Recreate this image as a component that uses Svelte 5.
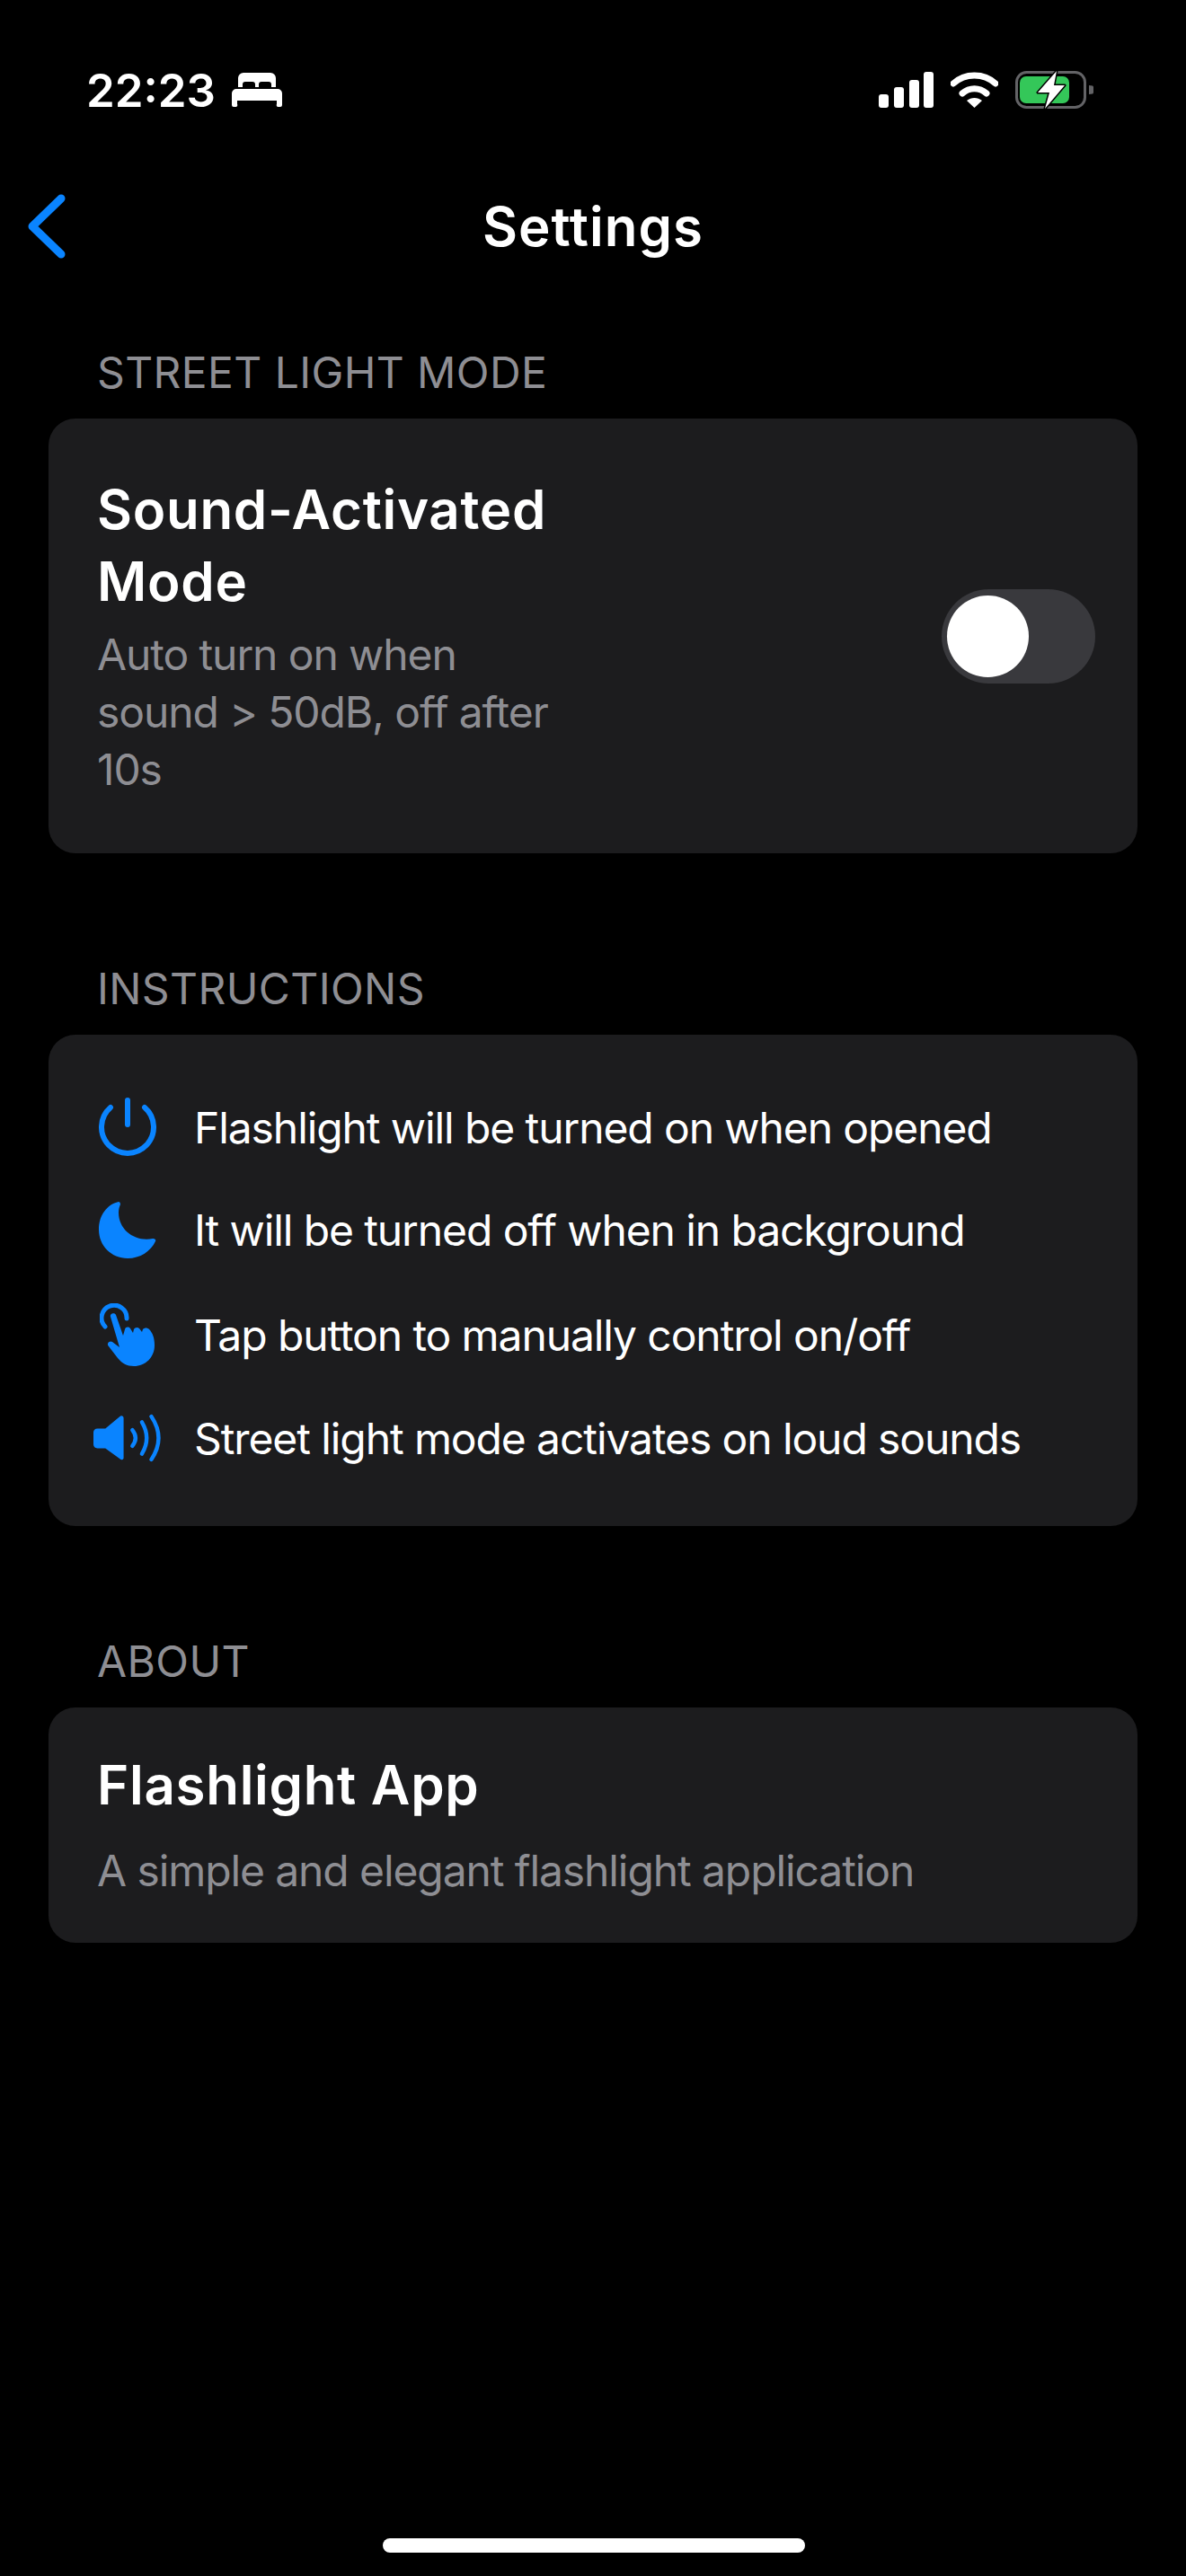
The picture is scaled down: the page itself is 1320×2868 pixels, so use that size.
<script>
	const tips = [
		{ icon: 'power', text: 'Flashlight will be turned on when opened' },
		{ icon: 'moon', text: 'It will be turned off when in background' },
		{ icon: 'hand', text: 'Tap button to manually control on/off' },
		{ icon: 'speaker', text: 'Street light mode activates on loud sounds' }
	];
</script>

<main class="screen">
	<header class="status">
		<div class="time">
			<span>22:23</span>
			<svg width="56" height="38" viewBox="0 0 56 38" fill="#fff">
				<path d="M7 16V6a6 6 0 0 1 6-6h30a6 6 0 0 1 6 6v10h-5v-3a3 3 0 0 0-3-3H33a3 3 0 0 0-3 3v3h-4v-3a3 3 0 0 0-3-3H15a3 3 0 0 0-3 3v3z" />
				<path d="M5 18h46a5 5 0 0 1 5 5v13a2 2 0 0 1-2 2h-2a2 2 0 0 1-2-3v-4H6v4a2 2 0 0 1-2 3H2a2 2 0 0 1-2-2V23a5 5 0 0 1 5-5z" />
			</svg>
		</div>
		<div class="indicators">
			<svg width="61" height="40" viewBox="0 0 61 40" fill="#fff">
				<rect x="0" y="25" width="11" height="15" rx="3" />
				<rect x="17" y="17" width="11" height="23" rx="3" />
				<rect x="34" y="9" width="11" height="31" rx="3" />
				<rect x="50" y="0" width="11" height="40" rx="3" />
			</svg>
			<svg width="53" height="40" viewBox="0 0 53 40" fill="none" stroke="#fff">
				<path d="M3 13C16 1 37 1 50 13" stroke-width="7" stroke-linecap="round" />
				<path d="M13 24c8-7 19-7 27 0" stroke-width="7" stroke-linecap="round" />
				<path d="M18 32c5-4 12-4 17 0l-8.500 8z" fill="#fff" stroke="none" />
			</svg>
			<svg class="battery" width="88" height="42" viewBox="0 0 88 42">
				<rect x="1.500" y="1.500" width="76" height="39" rx="11" fill="none" stroke="#636366" stroke-width="3" />
				<rect x="5" y="6" width="55" height="30" rx="7" fill="#34c759" />
				<path d="M87 18v6a2 2 0 0 1-1 1.500L82 26V16l4 .500a2 2 0 0 1 1 1.500z" fill="#636366" />
				<path d="M46 0 25 24h13l-5 18 22-26H43z" fill="#fff" stroke="#000" stroke-width="3" stroke-linejoin="round" paint-order="stroke" />
			</svg>
		</div>
	</header>

	<nav class="nav">
		<svg class="back" width="44" height="72" viewBox="0 0 44 72" fill="none">
			<path d="M38 5 6 36l32 31" stroke="#0a84ff" stroke-width="9" stroke-linecap="round" stroke-linejoin="round" />
		</svg>
		<h1>Settings</h1>
	</nav>

	<section class="group first">
		<h2>STREET LIGHT MODE</h2>
		<div class="card mode">
			<div class="mode-text">
				<h3>Sound-Activated Mode</h3>
				<p>Auto turn on when sound &gt; 50dB, off after 10s</p>
			</div>
			<div class="switch"><span class="knob"></span></div>
		</div>
	</section>

	<section class="group">
		<h2>INSTRUCTIONS</h2>
		<div class="card tips">
			{#each tips as tip}
				<div class="tip">
					<span class="tip-icon">
						{#if tip.icon === 'power'}
							<svg width="64" height="66" viewBox="0 0 64 66" fill="none" stroke="#0a84ff" stroke-width="6" stroke-linecap="round">
								<path d="M32 3v27" />
								<path d="M13 11a29 29 0 1 0 38 0" />
							</svg>
						{:else if tip.icon === 'moon'}
							<svg width="64" height="63" viewBox="0 0 64 63" fill="#0a84ff">
								<path d="M22 0C9 3 0 15 0 31c0 18 14 32 32 32 14 0 26-8 31-19 1-2-1-3-3-3-19 4-38-9-38-29 0-4 1-7 2-9 0-2-1-3-2-3z" />
							</svg>
						{:else if tip.icon === 'hand'}
							<svg width="62" height="70" viewBox="0 0 62 70">
								<path d="M6 26A14 14 0 1 1 30 17" fill="none" stroke="#0a84ff" stroke-width="5" stroke-linecap="round" />
								<path d="M12 15c-1-4 5-5 6-2l8 23 2-7c1-3 4-3 6-1l3 5 1-4c1-2 4-3 6-1l3 4 1-3c2-2 5-2 7 0 4 4 6 10 6 18 0 13-10 23-23 23-8 0-13-3-18-9L10 48c-3-3 1-7 4-5l8 6z" fill="#0a84ff" />
							</svg>
						{:else}
							<svg width="86" height="60" viewBox="0 0 86 60" fill="none" stroke="#0a84ff" stroke-width="5" stroke-linecap="round">
								<path d="M5 18h10L33 3c2-2 5-1 5 2v50c0 3-3 3-5 1L15 43H5c-3 0-5-2-5-5V23c0-3 2-5 5-5z" fill="#0a84ff" stroke="none" />
								<path d="M49 20Q57 30 49 40" />
								<path d="M61 10Q73 30 61 50" />
								<path d="M73 3Q91 30 73 57" />
							</svg>
						{/if}
					</span>
					<span>{tip.text}</span>
				</div>
			{/each}
		</div>
	</section>

	<section class="group">
		<h2>ABOUT</h2>
		<div class="card about">
			<h3>Flashlight App</h3>
			<p>A simple and elegant flashlight application</p>
		</div>
	</section>

	<div class="home"></div>
</main>

<style>
	:global(body) {
		background: #000;
	}
	.screen {
		position: relative;
		box-sizing: border-box;
		height: 2868px;
		padding: 72px 54px 0;
		background: #000;
		color: #fff;
		font-family: Inter, 'Noto Sans', sans-serif;
		overflow: hidden;
	}
	.status {
		display: flex;
		justify-content: space-between;
		align-items: center;
		height: 56px;
		padding: 0 48px 0 42px;
	}
	.time {
		display: flex;
		align-items: center;
		gap: 18px;
		font-size: 51px;
		font-weight: 600;
	}
	.indicators {
		display: flex;
		align-items: center;
		gap: 19px;
	}
	.nav {
		position: relative;
		display: flex;
		justify-content: center;
		align-items: center;
		height: 88px;
		margin-top: 80px;
	}
	.back {
		position: absolute;
		left: -24px;
		top: 8px;
	}
	h1 {
		margin: 0;
		font-size: 60px;
		font-weight: 600;
		letter-spacing: 1px;
	}
	.group {
		margin-top: 122px;
	}
	.group.first {
		margin-top: 90px;
	}
	h2 {
		margin: 0 0 22px 54px;
		font-size: 48px;
		line-height: 58px;
		font-weight: 400;
		letter-spacing: 0.4px;
		color: #8e8e93;
	}
	.card {
		box-sizing: border-box;
		background: #1c1c1e;
		border-radius: 30px;
		padding: 54px;
	}
	h3 {
		margin: 0;
		font-size: 60px;
		line-height: 80px;
		font-weight: 600;
		letter-spacing: 0.7px;
	}
	p {
		margin: 0;
		font-size: 48px;
		line-height: 64px;
		letter-spacing: -1.1px;
		color: #8e8e93;
	}
	.mode {
		display: flex;
		justify-content: space-between;
		align-items: center;
		height: 484px;
		padding: 0 47px 0 54px;
	}
	.mode-text {
		width: 520px;
	}
	.mode-text p {
		margin-top: 10px;
	}
	.switch {
		box-sizing: border-box;
		width: 171px;
		height: 105px;
		padding: 7px 6px;
		border-radius: 53px;
		background: #39393d;
	}
	.knob {
		display: block;
		width: 91px;
		height: 91px;
		border-radius: 50%;
		background: #fff;
	}
	.tips {
		display: flex;
		flex-direction: column;
		gap: 50px;
		height: 547px;
		padding: 70px 54px 0;
	}
	.tip {
		display: flex;
		align-items: center;
		gap: 36px;
		font-size: 48px;
		letter-spacing: -1.1px;
	}
	.tip-icon {
		display: flex;
		justify-content: center;
		width: 76px;
		margin-left: -4px;
	}
	.about {
		height: 262px;
		padding: 46px 54px;
	}
	.about p {
		margin-top: 24px;
	}
	.home {
		position: absolute;
		left: 426px;
		bottom: 26px;
		width: 470px;
		height: 16px;
		border-radius: 8px;
		background: #fff;
	}
</style>
